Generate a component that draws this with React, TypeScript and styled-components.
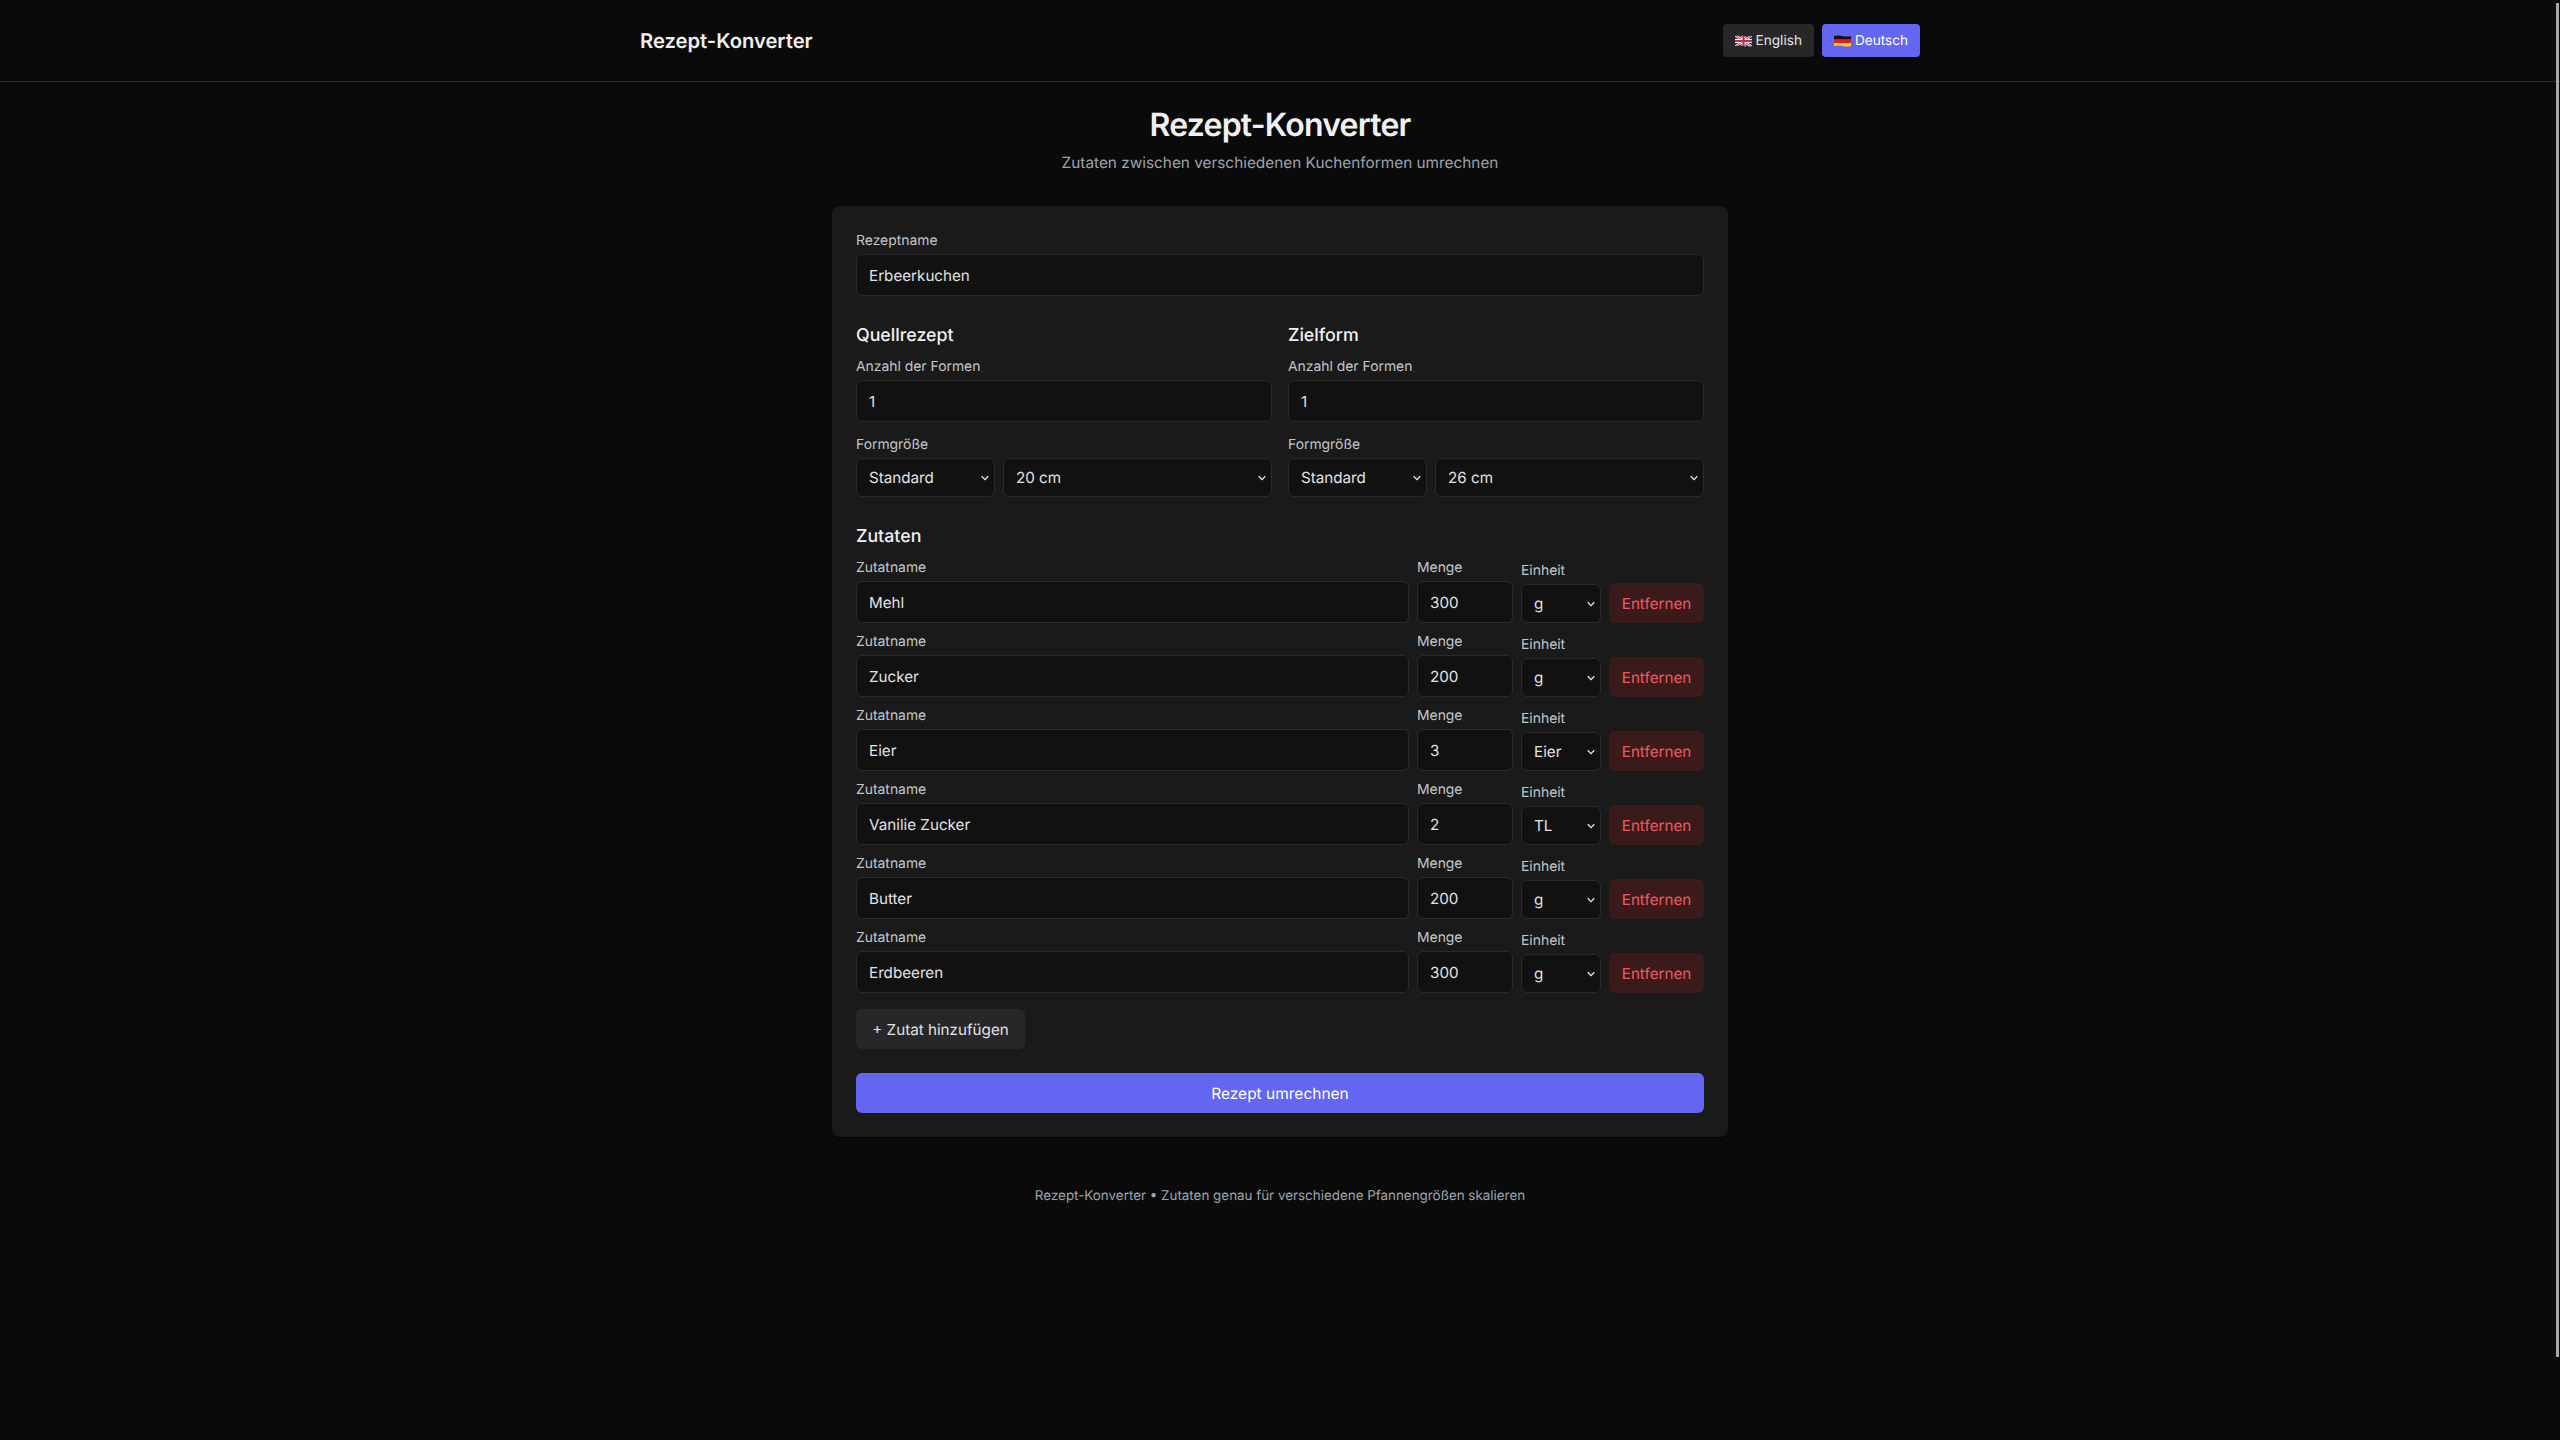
import React from "react";
import styled, { createGlobalStyle } from "styled-components";

const chevron = "data:image/svg+xml;utf8," + encodeURIComponent(
  '<svg xmlns="http://www.w3.org/2000/svg" width="8" height="6" viewBox="0 0 8 6"><path d="M0.7 1.2L4 4.6L7.3 1.2" fill="none" stroke="#e5e5e5" stroke-width="1.3"/></svg>'
);

const Global = createGlobalStyle`
  html, body { margin: 0; padding: 0; background: #0a0a0a; color-scheme: dark; overflow: hidden; }
  body { font-family: Inter, "Noto Sans", sans-serif; color: #e5e5e5; }
  * { box-sizing: border-box; text-rendering: geometricPrecision; }
`;
const Page = styled.div`min-height: 1440px; background: #0a0a0a;`;
const Header = styled.header`height: 82px; border-bottom: 1px solid #2a2a2a;`;
const HeaderInner = styled.div`
  width: 1280px; height: 81px; margin: 0 auto;
  display: flex; align-items: center; justify-content: space-between;
`;
const Logo = styled.div`font-size: 20.2px; line-height: 26px; font-weight: 600; color: #f0f0f0;`;
const LangGroup = styled.div`display: flex; gap: 8px;`;
const LangButton = styled.button<{ $active?: boolean }>`
  height: 33px; padding: 0 12px; border: 0; border-radius: 4px;
  display: flex; align-items: center; gap: 4px;
  font: 400 13.6px Inter, sans-serif;
  background: ${(p) => (p.$active ? "#6366f1" : "#27272a")};
  color: ${(p) => (p.$active ? "#ffffff" : "#e5e5e5")};
`;
const Main = styled.main`width: 896px; margin: 0 auto; padding-top: 24px;`;
const Title = styled.h1`
  margin: 0; font-size: 32px; line-height: 38px; font-weight: 600; letter-spacing: -0.025em;
  text-align: center; color: #f0f0f0;
`;
const Subtitle = styled.p`
  margin: 8px 0 0; font-size: 15.35px; line-height: 22px; text-align: center; color: #9ca3af;
`;
const Card = styled.form`
  margin-top: 32px; padding: 24px; background: #1a1a1a; border-radius: 8px;
  box-shadow: 0 1px 3px rgba(0,0,0,.3);
`;
const Label = styled.label`
  display: block; height: 20px; margin-bottom: 4px; font-size: 13.9px; line-height: 22px; color: #c4c7cc;
`;
const Input = styled.input`
  display: block; width: 100%; height: 42px; padding: 0 12px;
  background: #111111; border: 1px solid #2a2a2a; border-radius: 6px;
  font: 400 15.2px Inter, sans-serif; color: #e2e2e2; outline: none;
`;
const Select = styled.select`
  display: block; width: 100%; height: 39px; padding: 0 20px 0 12px;
  appearance: none;
  background: #111111 url("${chevron}") no-repeat right 5px center;
  border: 1px solid #2a2a2a; border-radius: 6px;
  font: 400 15.2px Inter, sans-serif; color: #e2e2e2; outline: none;
`;
const Columns = styled.div`display: grid; grid-template-columns: 1fr 1fr; gap: 16px; margin-top: 24px;`;
const SectionTitle = styled.h3`
  height: 28px; margin: 0 0 8px; font-size: 17.8px; line-height: 32px; font-weight: 500; color: #f0f0f0;
`;
const FieldGroup = styled.div`margin-bottom: 12px;`;
const SizeRow = styled.div`display: flex; gap: 8px;`;
const Shape = styled.div`flex: 0 0 139px;`;
const Size = styled.div`flex: 1;`;
const Ingredients = styled.div`margin-top: 24px;`;
const Rows = styled.div`display: flex; flex-direction: column; gap: 8px;`;
const Row = styled.div`display: flex; align-items: flex-end; gap: 8px;`;
const NameField = styled.div`flex: 1;`;
const AmountField = styled.div`flex: 0 0 96px;`;
const UnitField = styled.div`flex: 0 0 80px;`;
const RemoveButton = styled.button`
  flex: 0 0 95px; height: 40px; padding: 0; border: 0; border-radius: 6px;
  background: #3b1a1c; color: #ef5a5f; font: 400 15.2px Inter, sans-serif;
`;
const AddButton = styled.button`
  display: block; margin-top: 16px; width: 169px; height: 40px; padding: 0; border: 0; border-radius: 6px;
  background: #27272a; color: #e2e2e2; font: 400 15.2px Inter, sans-serif;
`;
const SubmitButton = styled.button`
  display: block; margin-top: 24px; width: 100%; height: 40px; padding: 0; border: 0; border-radius: 6px;
  background: #6366f1; color: #ffffff; font: 400 15.5px Inter, sans-serif;
`;
const Footer = styled.footer`
  margin-top: 49px; font-size: 13.4px; line-height: 20px; text-align: center; color: #9ca3af;
`;
const ScrollThumb = styled.div`
  position: fixed; top: 3px; right: 1px; width: 3px; height: 1354px; background: #a8a8a8;
`;

const wave = "M0 1Q4.2 -0.2 8.5 1T17 1V11Q12.8 12.2 8.5 11T0 11Z";

const FlagUK = () => (
  <svg width="17" height="12" viewBox="0 0 17 12" aria-hidden="true">
    <clipPath id="uk-wave"><path d={wave} /></clipPath>
    <g clipPath="url(#uk-wave)">
      <rect width="17" height="12" fill="#1f3a8a" />
      <path d="M0 0L17 12M17 0L0 12" stroke="#f5f5f5" strokeWidth="2.6" />
      <path d="M0 0L17 12M17 0L0 12" stroke="#d3243a" strokeWidth="0.9" />
      <path d="M8.5 0V12M0 6H17" stroke="#f5f5f5" strokeWidth="4" />
      <path d="M8.5 0V12M0 6H17" stroke="#d3243a" strokeWidth="2.2" />
    </g>
  </svg>
);
const FlagDE = () => (
  <svg width="17" height="12" viewBox="0 0 17 12" aria-hidden="true">
    <clipPath id="de-wave"><path d={wave} /></clipPath>
    <g clipPath="url(#de-wave)">
      <rect y="0" width="17" height="4.4" fill="#111111" />
      <rect y="4.4" width="17" height="3.6" fill="#dd1f26" />
      <rect y="8" width="17" height="4" fill="#ffc928" />
    </g>
  </svg>
);

const ingredients = [
  ["Mehl", "300", "g"],
  ["Zucker", "200", "g"],
  ["Eier", "3", "Eier"],
  ["Vanilie Zucker", "2", "TL"],
  ["Butter", "200", "g"],
  ["Erdbeeren", "300", "g"],
];
const units = ["g", "kg", "ml", "l", "TL", "EL", "Eier"];
const shapes = ["Standard", "Springform", "Kastenform"];
const sizes = ["18 cm", "20 cm", "22 cm", "24 cm", "26 cm", "28 cm"];

const PanColumn = ({ title, size }: { title: string; size: string }) => (
  <div>
    <SectionTitle>{title}</SectionTitle>
    <FieldGroup>
      <Label>Anzahl der Formen</Label>
      <Input type="number" defaultValue="1" />
    </FieldGroup>
    <Label>Formgröße</Label>
    <SizeRow>
      <Shape>
        <Select defaultValue="Standard">{shapes.map((s) => <option key={s}>{s}</option>)}</Select>
      </Shape>
      <Size>
        <Select defaultValue={size}>{sizes.map((s) => <option key={s}>{s}</option>)}</Select>
      </Size>
    </SizeRow>
  </div>
);

export default function App() {
  return (
    <Page>
      <Global />
      <Header>
        <HeaderInner>
          <Logo>Rezept-Konverter</Logo>
          <LangGroup>
            <LangButton type="button"><FlagUK /> English</LangButton>
            <LangButton type="button" $active><FlagDE /> Deutsch</LangButton>
          </LangGroup>
        </HeaderInner>
      </Header>
      <Main>
        <Title>Rezept-Konverter</Title>
        <Subtitle>Zutaten zwischen verschiedenen Kuchenformen umrechnen</Subtitle>
        <Card>
          <Label>Rezeptname</Label>
          <Input defaultValue="Erbeerkuchen" />
          <Columns>
            <PanColumn title="Quellrezept" size="20 cm" />
            <PanColumn title="Zielform" size="26 cm" />
          </Columns>
          <Ingredients>
            <SectionTitle>Zutaten</SectionTitle>
            <Rows>
              {ingredients.map(([name, amount, unit]) => (
                <Row key={name}>
                  <NameField>
                    <Label>Zutatname</Label>
                    <Input defaultValue={name} />
                  </NameField>
                  <AmountField>
                    <Label>Menge</Label>
                    <Input type="number" defaultValue={amount} />
                  </AmountField>
                  <UnitField>
                    <Label>Einheit</Label>
                    <Select defaultValue={unit}>{units.map((u) => <option key={u}>{u}</option>)}</Select>
                  </UnitField>
                  <RemoveButton type="button">Entfernen</RemoveButton>
                </Row>
              ))}
            </Rows>
          </Ingredients>
          <AddButton type="button">+ Zutat hinzufügen</AddButton>
          <SubmitButton type="button">Rezept umrechnen</SubmitButton>
        </Card>
        <Footer>Rezept-Konverter • Zutaten genau für verschiedene Pfannengrößen skalieren</Footer>
      </Main>
      <ScrollThumb />
    </Page>
  );
}
